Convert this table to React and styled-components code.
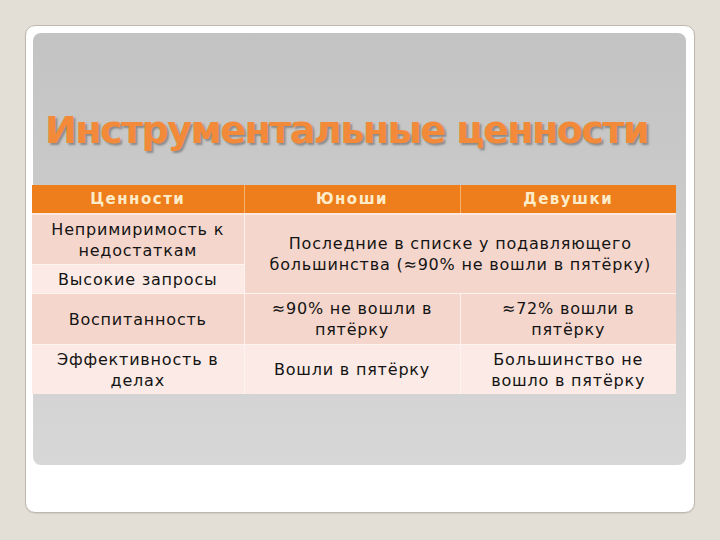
import styled, { createGlobalStyle } from "styled-components";

const GlobalStyle = createGlobalStyle`
  html, body {
    margin: 0;
    padding: 0;
    background: #e4dfd6;
  }
`;

const Page = styled.div`
  width: 720px;
  height: 540px;
  box-sizing: border-box;
  padding: 25px 25px 27px 25px;
  font-family: "DejaVu Sans", Verdana, sans-serif;
`;

const Card = styled.div`
  height: 100%;
  box-sizing: border-box;
  background: #ffffff;
  border: 1px solid #bdb8b0;
  border-radius: 10px;
  padding: 7px 8px 47px 7px;
  box-shadow: 0 1px 1px rgba(0, 0, 0, 0.08);
`;

const Panel = styled.div`
  height: 100%;
  box-sizing: border-box;
  background: linear-gradient(180deg, #c3c3c3 0%, #cbcbcb 45%, #d7d7d7 100%);
  border-radius: 8px;
  padding: 0 10px 0 0;
  display: flex;
  flex-direction: column;
`;

const TitleBox = styled.div`
  height: 152px;
  display: flex;
  align-items: flex-end;
  padding: 0 0 36px 12px;
  box-sizing: border-box;
`;

const Title = styled.h1`
  margin: 0;
  font-family: "DejaVu Sans", Verdana, sans-serif;
  font-weight: 700;
  font-size: 38px;
  line-height: 1;
  color: #f28a3a;
  letter-spacing: -1.5px;
  text-shadow: 2px 2px 2px rgba(80, 80, 80, 0.5);
  white-space: nowrap;
`;

const Table = styled.table`
  width: 644px;
  margin-left: -1px;
  border-collapse: collapse;
  table-layout: fixed;
  font-size: 16px;
  letter-spacing: 0.8px;
  color: #141414;
`;

const HeadCell = styled.th`
  height: 28px;
  padding: 0;
  background: #ee7d1b;
  color: #fdecc9;
  font-weight: 700;
  font-size: 15px;
  letter-spacing: 1.5px;
  text-align: center;
  border-left: 1px solid #f6b36c;
  border-bottom: 2px solid #fbe9e0;
  &:first-child {
    border-left: none;
  }
`;

const Cell = styled.td`
  padding: 0 6px;
  height: ${(p) => p.$h}px;
  background: ${(p) => (p.$light ? "#fbeae5" : "#f5d6cc")};
  text-align: center;
  vertical-align: middle;
  line-height: 21px;
  border-top: 1px solid #fdf3ef;
  border-left: 1px solid #fdf3ef;
  &:first-child {
    border-left: none;
  }
`;

const rows = [
  { first: "Непримиримость к недостаткам", h: 49, light: false },
  { first: "Высокие запросы", h: 28, light: true },
  {
    first: "Воспитанность",
    h: 50,
    light: false,
    boys: "≈90% не вошли в пятёрку",
    girls: "≈72% вошли в пятёрку",
  },
  {
    first: "Эффективность в делах",
    h: 49,
    light: true,
    boys: "Вошли в пятёрку",
    girls: "Большинство не вошло в пятёрку",
  },
];

export default function App() {
  return (
    <Page>
      <GlobalStyle />
      <Card>
        <Panel>
          <TitleBox>
            <Title>Инструментальные ценности</Title>
          </TitleBox>
          <Table>
            <colgroup>
              <col style={{ width: 212 }} />
              <col style={{ width: 216 }} />
              <col style={{ width: 216 }} />
            </colgroup>
            <thead>
              <tr>
                <HeadCell>Ценности</HeadCell>
                <HeadCell>Юноши</HeadCell>
                <HeadCell>Девушки</HeadCell>
              </tr>
            </thead>
            <tbody>
              {rows.map((r, i) => (
                <tr key={r.first}>
                  <Cell $h={r.h} $light={r.light}>
                    {r.first}
                  </Cell>
                  {i === 0 && (
                    <Cell colSpan={2} rowSpan={2} $light={false}>
                      Последние в списке у подавляющего большинства (≈90% не
                      вошли в пятёрку)
                    </Cell>
                  )}
                  {r.boys && (
                    <Cell $h={r.h} $light={r.light}>
                      {r.boys}
                    </Cell>
                  )}
                  {r.girls && (
                    <Cell $h={r.h} $light={r.light}>
                      {r.girls}
                    </Cell>
                  )}
                </tr>
              ))}
            </tbody>
          </Table>
        </Panel>
      </Card>
    </Page>
  );
}
